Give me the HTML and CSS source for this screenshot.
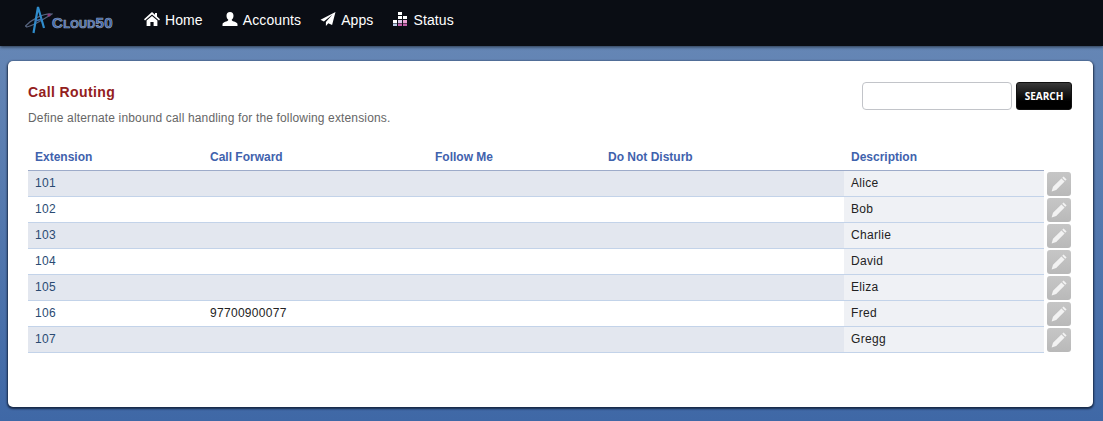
FILE: index.html
```html
<!DOCTYPE html>
<html lang="en">
<head>
    <meta charset="UTF-8">
    <title>Call Routing</title>
    <link rel="stylesheet" href="styles.css">
</head>
<body>
    <!-- Top navigation -->
    <nav class="navbar">
        <a class="logo" href="#">
            <svg class="logo-mark" width="28" height="28" viewBox="0 0 28 28">
                <path d="M0.5 20 C6 14 18 7 27 8 C22 11 10 19 2 21 Z" fill="none" stroke="#56637e" stroke-width="1.2"/>
                <path d="M8.5 27 L13 1 L19 22" fill="none" stroke="#2f8ccc" stroke-width="2.2"/>
                <path d="M10 15 L17 13" stroke="#3d77b8" stroke-width="1.4"/>
                <circle cx="24" cy="9" r="1.6" fill="#8e3a78"/>
            </svg>
            <span class="logo-text">Cloud50</span>
        </a>
        <ul class="nav-links">
            <li>
                <svg class="nav-icon" width="16" height="14" viewBox="0 0 16 14"><path fill="#fff" d="M8 0 L11 2.7 V1 H13 V4.5 L16 7.2 L15 8.4 L8 2.4 L1 8.4 L0 7.2 Z M2.6 8.6 L8 3.9 L13.4 8.6 V14 H9.6 V10 H6.4 V14 H2.6 Z"/></svg>
                <a href="#">Home</a>
            </li>
            <li>
                <svg class="nav-icon" width="16" height="14" viewBox="-0.5 0 16 14"><path fill="#fff" d="M7.5 0 C9.8 0 11 1.7 11 3.8 C11 5.6 10.2 7 9.2 7.8 C9.2 8.8 10 9 11.5 9.6 C13.4 10.3 15 11 15 12.4 V14 H0 V12.4 C0 11 1.6 10.3 3.5 9.6 C5 9 5.8 8.8 5.8 7.8 C4.8 7 4 5.6 4 3.8 C4 1.7 5.2 0 7.5 0 Z"/></svg>
                <a href="#">Accounts</a>
            </li>
            <li>
                <svg class="nav-icon" width="16" height="14" viewBox="-0.5 0 16 14"><path fill="#fff" d="M15 0 L0 7.8 L3.4 9.4 L12 2.6 L5.4 10 V14 L7.8 11.2 L11.6 13 Z"/></svg>
                <a href="#">Apps</a>
            </li>
            <li>
                <svg class="nav-icon" width="16" height="14" viewBox="-1 0 16 14">
                    <rect x="5" y="0" width="4" height="3" fill="#fff"/>
                    <rect x="5" y="4" width="4" height="3" fill="#fff"/>
                    <rect x="10" y="4" width="4" height="3" fill="#fff"/>
                    <rect x="0" y="8" width="4" height="3" fill="#fff"/>
                    <rect x="5" y="8" width="4" height="3" fill="#d9c7e8"/>
                    <rect x="10" y="8" width="4" height="3" fill="#e8a0d0"/>
                    <rect x="0" y="11.5" width="4" height="2.5" fill="#b9cbe8"/>
                    <rect x="5" y="11.5" width="4" height="2.5" fill="#c060a8"/>
                    <rect x="10" y="11.5" width="4" height="2.5" fill="#c060a8"/>
                </svg>
                <a href="#">Status</a>
            </li>
        </ul>
    </nav>

    <!-- Main panel -->
    <main class="panel">
        <div class="panel-head">
            <div>
                <h1>Call Routing</h1>
                <p class="intro">Define alternate inbound call handling for the following extensions.</p>
            </div>
            <form class="search">
                <input type="text" class="search-input">
                <button type="button" class="search-button">SEARCH</button>
            </form>
        </div>

        <table class="routes">
            <colgroup>
                <col class="col-ext">
                <col class="col-forward">
                <col class="col-follow">
                <col class="col-dnd">
                <col class="col-desc">
                <col class="col-edit">
            </colgroup>
            <thead>
                <tr>
                    <th>Extension</th>
                    <th>Call Forward</th>
                    <th>Follow Me</th>
                    <th>Do Not Disturb</th>
                    <th>Description</th>
                    <th class="edit-cell"></th>
                </tr>
            </thead>
            <tbody>
                <tr>
                    <td class="ext">101</td><td></td><td></td><td></td><td class="desc">Alice</td>
                    <td class="edit-cell"><a class="edit-button" href="#"><svg width="16" height="16" viewBox="0 0 16 16"><path d="M12.6 0.4 L15.6 3.4 L14.2 4.8 L11.2 1.8 Z M10.4 2.4 L13.6 5.6 L5.2 14 L0.6 15.4 L2 10.8 Z"/></svg></a></td>
                </tr>
                <tr>
                    <td class="ext">102</td><td></td><td></td><td></td><td class="desc">Bob</td>
                    <td class="edit-cell"><a class="edit-button" href="#"><svg width="16" height="16" viewBox="0 0 16 16"><path d="M12.6 0.4 L15.6 3.4 L14.2 4.8 L11.2 1.8 Z M10.4 2.4 L13.6 5.6 L5.2 14 L0.6 15.4 L2 10.8 Z"/></svg></a></td>
                </tr>
                <tr>
                    <td class="ext">103</td><td></td><td></td><td></td><td class="desc">Charlie</td>
                    <td class="edit-cell"><a class="edit-button" href="#"><svg width="16" height="16" viewBox="0 0 16 16"><path d="M12.6 0.4 L15.6 3.4 L14.2 4.8 L11.2 1.8 Z M10.4 2.4 L13.6 5.6 L5.2 14 L0.6 15.4 L2 10.8 Z"/></svg></a></td>
                </tr>
                <tr>
                    <td class="ext">104</td><td></td><td></td><td></td><td class="desc">David</td>
                    <td class="edit-cell"><a class="edit-button" href="#"><svg width="16" height="16" viewBox="0 0 16 16"><path d="M12.6 0.4 L15.6 3.4 L14.2 4.8 L11.2 1.8 Z M10.4 2.4 L13.6 5.6 L5.2 14 L0.6 15.4 L2 10.8 Z"/></svg></a></td>
                </tr>
                <tr>
                    <td class="ext">105</td><td></td><td></td><td></td><td class="desc">Eliza</td>
                    <td class="edit-cell"><a class="edit-button" href="#"><svg width="16" height="16" viewBox="0 0 16 16"><path d="M12.6 0.4 L15.6 3.4 L14.2 4.8 L11.2 1.8 Z M10.4 2.4 L13.6 5.6 L5.2 14 L0.6 15.4 L2 10.8 Z"/></svg></a></td>
                </tr>
                <tr>
                    <td class="ext">106</td><td>97700900077</td><td></td><td></td><td class="desc">Fred</td>
                    <td class="edit-cell"><a class="edit-button" href="#"><svg width="16" height="16" viewBox="0 0 16 16"><path d="M12.6 0.4 L15.6 3.4 L14.2 4.8 L11.2 1.8 Z M10.4 2.4 L13.6 5.6 L5.2 14 L0.6 15.4 L2 10.8 Z"/></svg></a></td>
                </tr>
                <tr>
                    <td class="ext">107</td><td></td><td></td><td></td><td class="desc">Gregg</td>
                    <td class="edit-cell"><a class="edit-button" href="#"><svg width="16" height="16" viewBox="0 0 16 16"><path d="M12.6 0.4 L15.6 3.4 L14.2 4.8 L11.2 1.8 Z M10.4 2.4 L13.6 5.6 L5.2 14 L0.6 15.4 L2 10.8 Z"/></svg></a></td>
                </tr>
            </tbody>
        </table>
    </main>
</body>
</html>
```

FILE: styles.css
```css
/* General Styling */
html {
    height: 100%;
}

body {
    margin: 0;
    min-height: 421px;
    font-family: "Liberation Sans", Arial, sans-serif;
    font-size: 12px;
    color: #222;
    background: linear-gradient(to bottom, #6586b5 46px, #3f68a6 100%);
    overflow: hidden;
}

a {
    text-decoration: none;
}

/* Navbar */
.navbar {
    display: flex;
    align-items: center;
    height: 40px;
    padding: 0 0 6px 25px;
    background: #0a0d14;
    box-shadow: 0 1px 3px rgba(0, 0, 0, 0.6);
}

.logo {
    display: flex;
    align-items: center;
    width: 119px;
    height: 40px;
}

.logo-mark {
    flex: none;
    margin-right: -1px;
}

.logo-text {
    font-size: 15px;
    font-weight: bold;
    font-variant: small-caps;
    letter-spacing: 0.3px;
    color: #2f5fb4;
    -webkit-text-stroke: 0.7px #98a1b3;
    margin-top: 4px;
}

.nav-links {
    display: flex;
    gap: 19px;
    margin: 0;
    padding: 0;
    list-style: none;
}

.nav-links li {
    display: flex;
    align-items: center;
    gap: 5px;
}

.nav-links a {
    font-size: 14px;
    letter-spacing: 0.1px;
    color: #fff;
}

.nav-icon {
    flex: none;
    margin-top: -2px;
}

/* Panel */
.panel {
    height: 326px;
    margin: 15px 10px 0 8px;
    padding: 20px 21px 0 20px;
    background: #fff;
    border-radius: 5px;
    box-shadow: 0 1px 2px 1px rgba(10, 20, 40, 0.75);
}

.panel-head {
    display: flex;
    justify-content: space-between;
    height: 63px;
}

h1 {
    margin: 2px 0 0;
    font-size: 14px;
    line-height: 18px;
    font-weight: bold;
    letter-spacing: 0.4px;
    color: #932020;
}

.intro {
    margin: 10px 0 0;
    line-height: 14px;
    letter-spacing: 0.15px;
    color: #666;
}

/* Search */
.search {
    display: flex;
    gap: 4px;
    height: 28px;
    margin-top: 1px;
}

.search-input {
    box-sizing: border-box;
    width: 150px;
    height: 28px;
    padding: 0 6px;
    background: #fff;
    border: 1px solid #c2c4c9;
    border-radius: 4px;
}

.search-button {
    width: 56px;
    height: 28px;
    padding: 0;
    font-family: "Open Sans", "Liberation Sans", sans-serif;
    font-size: 10px;
    font-weight: bold;
    color: #fff;
    background: linear-gradient(to bottom, #3a3a3a, #000 70%);
    border: 1px solid #111;
    border-radius: 3px;
}

/* Routes table */
.routes {
    width: 1044px;
    border-collapse: separate;
    border-spacing: 0;
    table-layout: fixed;
}

.col-ext { width: 175px; }
.col-forward { width: 225px; }
.col-follow { width: 173px; }
.col-dnd { width: 243px; }
.col-desc { width: 200px; }
.col-edit { width: 28px; }

.routes th {
    height: 26px;
    padding: 0 7px;
    text-align: left;
    font-weight: bold;
    color: #3f62ad;
    border-bottom: 1px solid #9dabc9;
}

.routes td {
    box-sizing: border-box;
    height: 26px;
    padding: 0 7px 2px;
    letter-spacing: 0.3px;
    border-bottom: 1px solid #c3d3e9;
}

.routes tbody tr:nth-child(odd) td {
    background: #e3e7ef;
}

.routes td.ext {
    color: #2a4a72;
}

.routes td.desc,
.routes tbody tr:nth-child(odd) td.desc {
    background: #eff1f5;
}

.routes th.edit-cell,
.routes td.edit-cell,
.routes tbody tr:nth-child(odd) td.edit-cell {
    padding: 0 0 0 3px;
    background: none;
    border-bottom: none;
}

.edit-button {
    display: flex;
    align-items: center;
    justify-content: center;
    width: 24px;
    height: 24px;
    background: linear-gradient(to bottom, #c6c6c6, #b9b9b9);
    border-radius: 3px;
}

.edit-button path {
    fill: #f2f2f2;
}
```
